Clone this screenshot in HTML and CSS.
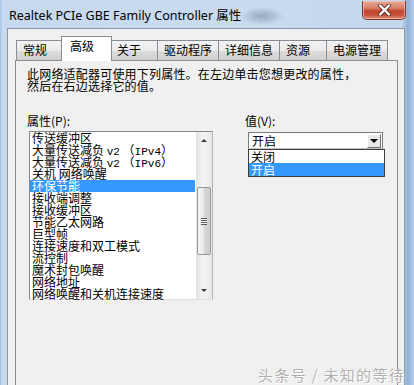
FILE: index.html
```html
<!DOCTYPE html>
<html lang="zh-CN">
<head>
<meta charset="utf-8">
<title>Realtek PCIe GBE Family Controller 属性</title>
<link rel="stylesheet" href="styles.css">
</head>
<body>
<div class="window">
  <div class="titlebar">
    <div class="title">Realtek PCIe GBE Family Controller 属性</div>
    <div class="close">
      <svg width="17" height="12" viewBox="0 0 17 12">
        <path d="M4 1.5 L13 10.5 M13 1.5 L4 10.5" stroke="#5a2a22" stroke-width="4" stroke-linecap="round"/>
        <path d="M4 1.5 L13 10.5 M13 1.5 L4 10.5" stroke="#fff" stroke-width="2.4" stroke-linecap="round"/>
      </svg>
    </div>
  </div>
  <div class="client">
    <div class="tabs">
      <div class="tab">常规</div>
      <div class="tab active">高级</div>
      <div class="tab">关于</div>
      <div class="tab">驱动程序</div>
      <div class="tab">详细信息</div>
      <div class="tab">资源</div>
      <div class="tab">电源管理</div>
    </div>
    <div class="panel">
      <p class="desc">此网络适配器可使用下列属性。在左边单击您想更改的属性，<br>然后在右边选择它的值。</p>
      <div class="fields">
        <div class="col-left">
          <div class="label">属性(P):</div>
          <div class="listbox">
            <ul class="items">
              <li>传送缓冲区</li>
              <li>大量传送减负 <span class="asc">v2</span> （<span class="asc">IPv4</span>）</li>
              <li>大量传送减负 <span class="asc">v2</span> （<span class="asc">IPv6</span>）</li>
              <li>关机 网络唤醒</li>
              <li class="sel">环保节能</li>
              <li>接收端调整</li>
              <li>接收缓冲区</li>
              <li>节能乙太网路</li>
              <li>巨型帧</li>
              <li>连接速度和双工模式</li>
              <li>流控制</li>
              <li>魔术封包唤醒</li>
              <li>网络地址</li>
              <li>网络唤醒和关机连接速度</li>
            </ul>
            <div class="scrollbar">
              <div class="sb-btn"><span class="arrow-up"></span></div>
              <div class="sb-track">
                <div class="sb-gap-top"></div>
                <div class="sb-thumb"><span class="grip"></span></div>
              </div>
              <div class="sb-btn"><span class="arrow-down"></span></div>
            </div>
          </div>
        </div>
        <div class="col-right">
          <div class="label">值(V):</div>
          <div class="combo-wrap">
            <div class="combo">
              <span class="combo-text">开启</span>
              <span class="combo-btn"><span class="arrow-down big"></span></span>
            </div>
            <ul class="dropdown">
              <li>关闭</li>
              <li class="sel">开启</li>
            </ul>
          </div>
        </div>
      </div>
    </div>
  </div>
  <div class="watermark">头条号 / 未知的等待</div>
</div>
</body>
</html>
```
FILE: styles.css
```css
* { box-sizing: border-box; }
html, body { margin: 0; padding: 0; }
body {
  width: 414px;
  height: 385px;
  overflow: hidden;
  font-family: "Noto Sans CJK SC", "Noto Sans", sans-serif;
  font-size: 12px;
  color: #000;
}
.window {
  position: relative;
  height: 385px;
  display: flex;
  flex-direction: column;
  background:
    radial-gradient(ellipse 22px 9px at 262px 16px, rgba(110,125,145,0.55), rgba(110,125,145,0) 100%),
    linear-gradient(90deg, #a9c6e6 0, #cadcf0 3px, #c6d9ee 6px, #c8dbef 60%, #c3d7ed 97%, #8fb1d6 98.5%, #b8cfe9 100%);
}
.titlebar {
  height: 28px;
  display: flex;
  align-items: flex-start;
}
.title {
  padding: 5px 0 0 9px;
  font-family: "Noto Sans", "Noto Sans CJK SC", sans-serif;
  font-size: 12.5px;
  color: #000;
}
.close {
  margin-left: auto;
  margin-right: 8px;
  margin-top: 1px;
  width: 44px;
  height: 19px;
  border: 1px solid #7a3a30;
  border-top: none;
  border-radius: 0 0 5px 5px;
  background: linear-gradient(180deg, #e6a595 0%, #d9806c 40%, #c2432c 55%, #c9563f 80%, #e0937e 100%);
  display: flex;
  align-items: center;
  justify-content: center;
  box-shadow: inset 0 0 0 1px rgba(255,220,210,0.5);
}
.client {
  flex: 1;
  margin: 0 9px 0 7px;
  border: 1px solid #8b98a8;
  border-bottom: none;
  background: #f0f0f0;
  display: flex;
  flex-direction: column;
}
.tabs {
  display: flex;
  align-items: flex-end;
  padding: 7px 0 0 8px;
  position: relative;
  z-index: 1;
}
.tab {
  height: 20px;
  min-width: 48px;
  padding: 2px 6px 0 6px;
  margin-right: -1px;
  border: 1px solid #898c95;
  border-bottom: none;
  background: linear-gradient(180deg, #f2f2f2 0%, #ebebeb 50%, #dddddd 51%, #cfcfcf 100%);
  line-height: 14px;
  white-space: nowrap;
}
.tab.active {
  height: 25px;
  margin: 0 -1px -1px -2px;
  min-width: 51px;
  padding: 2px 6px 0 8px;
  background: #fff;
  position: relative;
  z-index: 2;
}
.tab.active + .tab { margin-left: -1px; }
.panel {
  flex: 1;
  margin: 0 6px 0 7px;
  border: 1px solid #898c95;
  border-bottom: none;
  padding: 7px 0 0 11px;
  background: #f0f0f0;
}
.desc {
  margin: 0;
  line-height: 12px;
  letter-spacing: 0.2px;
}
.fields {
  margin-top: 23px;
  display: grid;
  grid-template-columns: 218px 160px;
}
.label {
  line-height: 12px;
  height: 12px;
}
.listbox {
  margin: 4px 0 0 2px;
  width: 184px;
  height: 169px;
  border: 1px solid #828790;
  border-right-color: #b5b5b5;
  border-bottom-color: #e0e0e0;
  background: #fff;
  display: flex;
}
.items {
  list-style: none;
  margin: 0;
  padding: 0 1px 0 0;
  flex: 1;
}
.items li {
  height: 12px;
  line-height: 12px;
  padding-left: 2px;
  white-space: nowrap;
}
.items li.sel, .dropdown li.sel {
  background: #3399ff;
  color: #fff;
}
.asc {
  font-family: "Liberation Mono", monospace;
  font-size: 11px;
}
.scrollbar {
  width: 16px;
  display: flex;
  flex-direction: column;
  background: linear-gradient(90deg, #e3e3e3, #f2f2f2 40%, #f2f2f2 60%, #e6e6e6);
}
.sb-btn {
  height: 17px;
  display: flex;
  align-items: center;
  justify-content: center;
}
.sb-track {
  flex: 1;
  display: flex;
  flex-direction: column;
}
.sb-gap-top { height: 38px; }
.sb-thumb {
  height: 68px;
  margin: 0 1px;
  border: 1px solid #979797;
  border-radius: 2px;
  background: linear-gradient(90deg, #f5f5f5, #e6e6e6 50%, #d6d6d6 51%, #cfcfcf);
  display: flex;
  align-items: center;
  justify-content: center;
}
.grip {
  width: 6px;
  height: 7px;
  background: repeating-linear-gradient(180deg, #5a5a5a 0 1px, #f4f4f4 1px 2px);
}
.arrow-up, .arrow-down {
  width: 0;
  height: 0;
  border-left: 3px solid transparent;
  border-right: 3px solid transparent;
}
.arrow-up { border-bottom: 3px solid #3a3a3a; }
.arrow-down { border-top: 3px solid #3a3a3a; }
.arrow-down.big {
  border-left-width: 4px;
  border-right-width: 4px;
  border-top: 4px solid #000;
}
.combo-wrap {
  position: relative;
  margin: 5px 0 0 3px;
  width: 135px;
}
.combo {
  height: 17px;
  border: 1px solid #7a7a7a;
  border-bottom-color: #c0c0c0;
  background: #fff;
  display: flex;
  align-items: center;
}
.combo-text {
  flex: 1;
  padding-left: 3px;
  line-height: 12px;
}
.combo-btn {
  width: 14px;
  height: 14px;
  margin-right: 1px;
  border: 1px solid;
  border-color: #fff #6f6f6f #6f6f6f #fff;
  background: #e8e8e8;
  display: flex;
  align-items: center;
  justify-content: center;
}
.dropdown {
  position: absolute;
  left: 0;
  top: 17px;
  width: 137px;
  margin: 0;
  padding: 0;
  list-style: none;
  border: 1px solid #3c3c3c;
  background: #fff;
}
.dropdown li {
  height: 13px;
  line-height: 13px;
  padding-left: 2px;
}
.watermark {
  position: absolute;
  right: 9px;
  bottom: 1px;
  font-size: 15px;
  line-height: 18px;
  color: #b0b0b0;
  text-shadow: 0 0 1px #fff, 1px 1px 0 #fff;
  letter-spacing: 1.3px;
}
```
